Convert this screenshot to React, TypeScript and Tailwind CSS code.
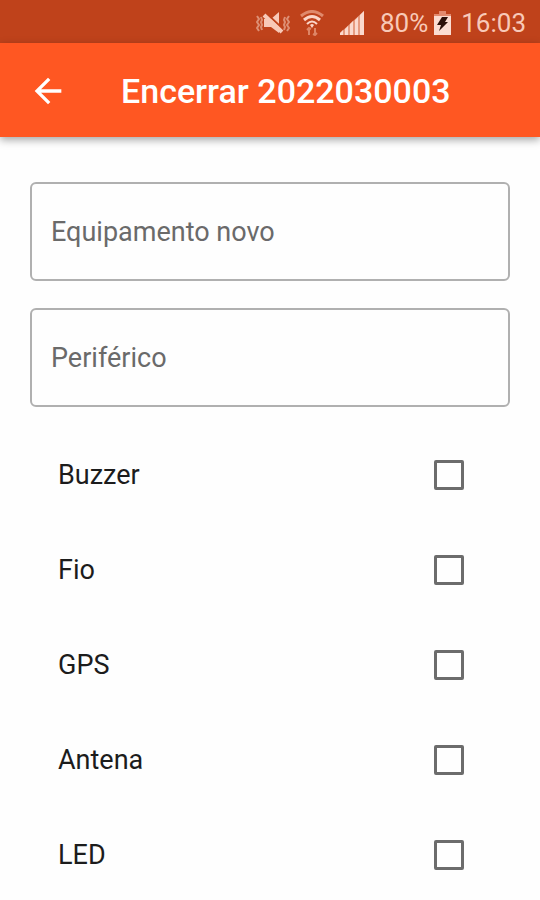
import React from "react";

const fields = [
  { id: "equipamento", label: "Equipamento novo" },
  { id: "periferico", label: "Periférico" },
];

const items = ["Buzzer", "Fio", "GPS", "Antena", "LED"];

function MuteIcon() {
  return (
    <svg className="mr-2.5" width="34" height="24" viewBox="0 0 34 24" fill="none" aria-hidden="true">
      <path d="M8 8h7l8-7v21l-8-6H8z" fill="#f8c9b8" />
      <path d="M10 2l17 16" stroke="#bf421b" strokeWidth="2" />
      <path d="M8 4l18 17" stroke="#f8c9b8" strokeWidth="4" />
      <path
        d="M1 5l2 3-2 3 2 3-2 3 2 3M5 6l1 3-1 2 1 3-1 2 1 3M33 5l-2 3 2 3-2 3 2 3-2 3M29 6l-1 3 1 2-1 3 1 2-1 3"
        stroke="#dd8f74"
        strokeWidth="2"
      />
    </svg>
  );
}

function WifiIcon() {
  return (
    <svg className="mr-4" width="24" height="26" viewBox="0 0 24 26" fill="none" aria-hidden="true">
      <path d="M1 6Q12-3 23 6" stroke="#e0896b" strokeWidth="3" />
      <path d="M4 10Q12 3 20 10" stroke="#fbd5c8" strokeWidth="3" />
      <path d="M7 14Q12 9 17 14" stroke="#fbd5c8" strokeWidth="2" />
      <path d="M10 15Q12 13 14 15L12 18z" fill="#fbd5c8" />
      <path d="M9 25v-7M7 20l2-2 2 1M15 18v7M17 23l-2 2-2-1" stroke="#dd8566" strokeWidth="2" />
    </svg>
  );
}

function SignalIcon() {
  return (
    <svg className="mr-4" width="24" height="24" viewBox="0 0 24 24" aria-hidden="true">
      <path d="M0 24v-2L24 0v24z" fill="#e69b80" />
      <path d="M0 24v-2l3-3v5zM5 24v-6l3-3v9zM10 24V13l3-3v14zM15 24V9l3-3v18zM20 24V4l4-4v24z" fill="#fbd9cd" />
    </svg>
  );
}

function BatteryIcon() {
  return (
    <svg className="mr-2.5 ml-1.5" width="17" height="24" viewBox="0 0 17 24" aria-hidden="true">
      <path d="M5 0h7v3h5v3H0V3h5z" fill="#e38a6e" />
      <path d="M0 5h17v19H0z" fill="#fbdcd1" />
      <path d="M8 6h6l-3 5h3L5 20l2-6H3z" fill="#2c1009" />
    </svg>
  );
}

export default function App() {
  return (
    <div className="min-h-screen bg-[#fefefe] font-[Roboto,sans-serif]">
      <div className="flex h-[43px] items-center justify-end bg-[#bf421b] pt-0.5 pr-3.5 text-[26px] leading-8 text-[#f8c9b8]">
        <MuteIcon />
        <WifiIcon />
        <SignalIcon />
        <span>80%</span>
        <BatteryIcon />
        <span>16:03</span>
      </div>

      <header className="flex h-[94px] items-center bg-[#ff5722] px-7 pt-0.5 text-white shadow-[0_3px_8px_rgba(0,0,0,0.35)]">
        <button type="button" aria-label="Voltar" className="flex size-10 items-center justify-center">
          <svg width="40" height="40" viewBox="0 0 24 24" fill="currentColor" aria-hidden="true">
            <path d="M20 11H7.830l5.590-5.590L12 4l-8 8 8 8 1.410-1.410L7.830 13H20v-2z" />
          </svg>
        </button>
        <h1 className="ml-[53px] text-[34px] leading-10 font-medium whitespace-nowrap">Encerrar 2022030003</h1>
      </header>

      <main className="px-[30px] pt-[45px]">
        <div className="flex flex-col gap-[27px]">
          {fields.map((f) => (
            <input
              key={f.id}
              id={f.id}
              type="text"
              aria-label={f.label}
              placeholder={f.label}
              className="h-[99px] w-full rounded-md border-2 border-[#b0b0b0] px-[19px] text-[27px] leading-8 text-[#212121] placeholder:text-[#6a6a6a]"
            />
          ))}
        </div>

        <ul className="mt-5">
          {items.map((name) => (
            <li key={name}>
              <label className="flex h-[95px] items-center justify-between pr-[46px] pl-7 text-[27px] leading-8 text-[#1c1c1c]">
                {name}
                <input
                  type="checkbox"
                  className="size-[30px] appearance-none rounded-xs border-3 border-[#6c6c6c] checked:bg-[#ff5722]"
                />
              </label>
            </li>
          ))}
        </ul>
      </main>
    </div>
  );
}
